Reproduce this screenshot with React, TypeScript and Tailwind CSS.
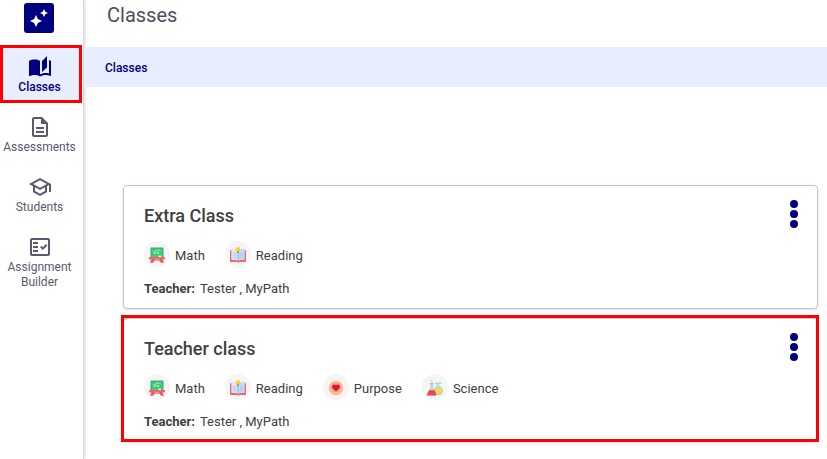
import { MdAutoStories, MdOutlineDescription, MdOutlineFactCheck, MdOutlineSchool } from "react-icons/md";

const navItems = [
  { label: "Classes", Icon: MdAutoStories, active: true },
  { label: "Assessments", Icon: MdOutlineDescription, active: false },
  { label: "Students", Icon: MdOutlineSchool, active: false },
  { label: "Assignment Builder", Icon: MdOutlineFactCheck, active: false },
];

const classes = [
  { title: "Extra Class", teacher: "Tester , MyPath", subjects: ["Math", "Reading"], selected: false },
  { title: "Teacher class", teacher: "Tester , MyPath", subjects: ["Math", "Reading", "Purpose", "Science"], selected: true },
];

function Logo() {
  return (
    <svg viewBox="0 0 30 30" className="h-[30px] w-[30px]" aria-hidden="true">
      <rect width="30" height="30" rx="3" fill="#000080" />
      <path d="M12 12l1.9 4.1L18 18l-4.1 1.9L12 24l-1.9-4.1L6 18l4.1-1.9z" fill="#fff" />
      <path d="M20 6l1.3 2.7L24 10l-2.7 1.3L20 14l-1.3-2.7L16 10l2.7-1.3z" fill="#fff" />
    </svg>
  );
}

function MathIcon() {
  return (
    <svg viewBox="0 0 16 16" className="h-4 w-4" aria-hidden="true">
      <rect x="1.5" y="0.5" width="13" height="10.5" rx="0.6" fill="#3fa58d" />
      <rect x="2.6" y="1.6" width="10.8" height="8.4" fill="#3ecb70" />
      <path d="M4 4.6h1l1 2.3 1-3.7h4.5M8 5l2 2M10 5l-2 2" stroke="#c7f4d5" strokeWidth="0.7" fill="none" />
      <rect x="9.5" y="8.6" width="2.5" height="1.4" fill="#eef7f2" />
      <rect x="0" y="10" width="16" height="2.6" rx="0.5" fill="#f4646a" />
      <path d="M2.6 12h3.4l-1.8 3.8H1zM10 12h3.4l1.6 3.8h-3.2z" fill="#e9585f" />
      <path d="M5 13.2h6" stroke="#f4646a" strokeWidth="1" />
    </svg>
  );
}

function ReadingIcon() {
  return (
    <svg viewBox="0 0 16 16" className="h-4 w-4" aria-hidden="true">
      <path d="M0 3.2h1.8v9.6H16V14.2q0 .8-.8.8H9.2L8 15.8 6.8 15H.8q-.8 0-.8-.8zM14.2 3.2H16v10h-1.8z" fill="#f0666d" />
      <path d="M1.4 1.6Q5 1.6 8 3.8v10Q5 12.4 1.4 12.4z" fill="#d8e8fc" />
      <path d="M14.6 1.6Q11 1.6 8 3.8v10q3-1.4 6.6-1.4z" fill="#c4dcfa" />
      <path d="M2.8 6.2l3.6 1M2.8 8.2l3.6 1M2.8 10.2l3.6 1M13.2 6.2l-3.6 1M13.2 8.2l-3.6 1M13.2 10.2l-3.6 1" stroke="#93bdf1" strokeWidth="0.7" />
      <path d="M8 5v8.8" stroke="#78a7e4" strokeWidth="0.8" />
      <circle cx="8" cy="2.4" r="2.3" fill="#ffd02e" />
      <rect x="7" y="4.3" width="2" height="1.6" fill="#8a8778" />
    </svg>
  );
}

function PurposeIcon() {
  return (
    <svg viewBox="0 0 16 16" className="h-4 w-4" aria-hidden="true">
      <ellipse cx="8" cy="8" rx="7.2" ry="7.4" fill="#fdc4a4" />
      <path d="M2.2 11.5C1 7 3 2.4 6.6 1.8M13.8 11.5C15 7 13 2.4 9.4 1.8M4.4 13.4l2 1M11.6 13.4l-2 1" stroke="#f5a27f" strokeWidth="0.8" fill="none" />
      <circle cx="8" cy="7.6" r="4.9" fill="#fb9a85" />
      <path d="M8 11.6L4.4 8C2.9 6 5.8 3.4 8 5.6c2.2-2.2 5.1.4 3.6 2.4z" fill="#df1434" />
    </svg>
  );
}

function ScienceIcon() {
  return (
    <svg viewBox="0 0 16 16" className="h-4 w-4" aria-hidden="true">
      <path d="M8.4 3.2H14M10.2 3.5V7" stroke="#58cdb8" strokeWidth="1" />
      <path d="M10.2 3.5h2.6V8h-2.6z" fill="#bfeee5" />
      <circle cx="11.4" cy="10.8" r="4.5" fill="#8fdccf" />
      <path d="M7.1 10h8.6a4.3 4.3 0 1 1-8.6 0z" fill="#fac94d" />
      <circle cx="11.7" cy="10.4" r="3.2" fill="#fbd263" />
      <path d="M3.2 3.6v4L.2 14q-.6 1.6 1 1.6h7q1.6 0 1-1.6L6.2 7.6v-4z" fill="#c9d1de" />
      <path d="M2 10.2h5.5L9.2 14q.6 1.6-1 1.6h-7q-1.6 0-1-1.6z" fill="#ef4450" />
      <path d="M2.7 3.6h4" stroke="#a9afbd" strokeWidth="0.9" />
      <circle cx="5" cy="1.7" r="0.9" fill="#f7bcc4" />
      <circle cx="3.7" cy="0.6" r="0.5" fill="#f39aa5" />
    </svg>
  );
}

const subjectIcons: Record<string, () => React.JSX.Element> = {
  Math: MathIcon,
  Reading: ReadingIcon,
  Purpose: PurposeIcon,
  Science: ScienceIcon,
};

export default function App() {
  return (
    <div className="flex min-h-screen bg-white font-[Roboto,sans-serif] text-[#404040]">
      {/* Sidebar */}
      <aside className="w-[84px] shrink-0 border-r border-[#d9d9d9] shadow-[1px_0_3px_rgba(0,0,0,0.15)]">
        <div className="flex h-[45px] justify-center pt-[3px] pr-[5px]">
          <Logo />
        </div>
        <nav className="flex flex-col gap-[2px]">
          {navItems.map(({ label, Icon, active }) => (
            <a
              key={label}
              href="#"
              className={
                active
                  ? "mr-px flex min-h-[58px] flex-col items-center border-3 border-[#ff0000] bg-[#e8edff] pt-[7px] pr-[3px] text-[#000080]"
                  : "flex min-h-[58px] flex-col items-center pt-[10px] pr-1 text-[#5c5870]"
              }
            >
              <Icon className="mb-px h-6 w-6" />
              <span className={active ? "text-center text-xs leading-[15px] font-medium" : "text-center text-xs leading-[15px]"}>
                {label}
              </span>
            </a>
          ))}
        </nav>
      </aside>

      <main className="min-w-0 flex-1">
        <h1 className="h-[47px] pt-[3px] pl-[23px] text-xl leading-6 text-[#4a4f5c]">Classes</h1>
        <div className="flex h-10 items-center bg-[#e8edff] pt-px pl-[21px] text-xs font-medium">
          <a href="#" className="text-[#000080]">Classes</a>
        </div>

        {/* Class cards */}
        <div className="mt-[98px] flex flex-col gap-[9px] pr-[9px] pl-[39px]">
          {classes.map((item) => (
            <section key={item.title} className="relative rounded border border-[#c4c4c4] pb-[9px] shadow">
              <div className="flex items-start justify-between pt-[14px] pr-[19px] pl-5">
                <div className="pt-1">
                  <h2 className="text-lg leading-6 font-medium">{item.title}</h2>
                  <div className="mt-[13px] flex gap-5">
                    {item.subjects.map((subject) => {
                      const SubjectIcon = subjectIcons[subject];
                      return (
                        <div key={subject} className="flex items-center gap-[5px] text-[13px] leading-5">
                          <span className="flex h-[26px] w-[26px] items-center justify-center rounded-full bg-[#f5f5f5] pt-[2px]">
                            <SubjectIcon />
                          </span>
                          <span className="pt-[3px]">{subject}</span>
                        </div>
                      );
                    })}
                  </div>
                  <p className="mt-3 text-[13px] leading-5">
                    <span className="mr-[5px] font-bold">Teacher:</span>
                    {item.teacher}
                  </p>
                </div>
                <button type="button" aria-label="Class options" className="flex flex-col items-center gap-[2px]">
                  <span className="h-2 w-2 rounded-full bg-[#000080]" />
                  <span className="h-2 w-2 rounded-full bg-[#000080]" />
                  <span className="h-2 w-2 rounded-full bg-[#000080]" />
                </button>
              </div>
              {item.selected && (
                <div className="pointer-events-none absolute -top-1 -right-[2px] -bottom-px -left-[3px] border-3 border-[#ff0000]" />
              )}
            </section>
          ))}
        </div>
      </main>
    </div>
  );
}
